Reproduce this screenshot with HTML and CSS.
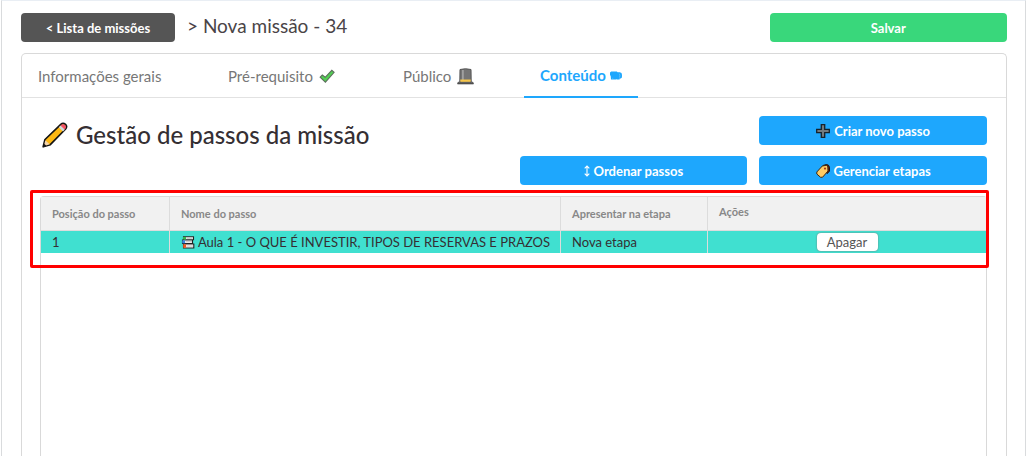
FILE: index.html
```html
<!DOCTYPE html>
<html lang="pt-BR">
<head>
<meta charset="utf-8">
<meta name="viewport" content="width=device-width, initial-scale=1">
<title>Nova missão - 34</title>
<link rel="stylesheet" href="styles.css">
</head>
<body>
<main class="frame">
  <header class="topbar">
    <div class="crumbs">
      <button class="btn btn-dark" type="button">&lt; Lista de missões</button>
      <h1 class="title">&gt; Nova missão - 34</h1>
    </div>
    <button class="btn btn-green" type="button">Salvar</button>
  </header>
  <section class="card">
    <nav class="tabs">
      <a class="tab" href="#info">Informações gerais</a>
      <a class="tab" href="#prerequisito">Pré-requisito
        <svg class="icon16" viewBox="0 0 16 16" aria-hidden="true"><path d="M1.200 9.200 3.300 7l2.900 2.300 6.600-7 2.300 2-8.700 9.900z" fill="#52d053" stroke="#5d705d" stroke-width="1.100"/></svg></a>
      <a class="tab" href="#publico">Público
        <svg class="icon17" viewBox="0 0 17 17" aria-hidden="true"><path d="M3 1.500Q8.500 0 14 1.500L14.200 14H2.800z" fill="#757575" stroke="#555"/><path d="M5 2h1.800v10H5z" fill="#a0a0a0"/><path d="M3.300 11.500h10.400v2.300H3.300z" fill="#f6c64b"/><path d="M1 14.200h2l1 .4h9l1-.4h2l.5 1.800H.500z" fill="#555" stroke="#444" stroke-width=".6"/></svg></a>
      <a class="tab tab-active" href="#conteudo" aria-current="page">Conteúdo
        <svg class="icon12" viewBox="0 0 12 9" aria-hidden="true"><path d="M0 1.500 1.200.500h5.600l.8.700h2.200L11.500 2l.5 2-.1 2.500-1.100 1.100H9.600v1H6.800L6.500 8l-.4.600H1L.700 5 0 4z" fill="#1ea7fd"/><path d="m9.200 2.600.6 1.800-.3 2.200M2.600 7.800l.2-1" fill="none" stroke="#8fd2fb" stroke-width=".5"/></svg></a>
    </nav>
    <div class="content">
      <div class="tools">
        <h2 class="heading">
          <svg class="pencil" viewBox="0 0 26 26" aria-hidden="true"><path d="M1.200 24.800 3 17.500 18.800 2.300Q21 .300 23.500 2.300 25.600 4.500 23.600 7L8.300 22.700z" fill="#fdb813" stroke="#151515" stroke-width="1.700" stroke-linejoin="round"/><path d="m3.300 18.300 4.400 4-5.800 1.900z" fill="#f3d3aa"/><path d="m1.300 24.700.8-3 2.300 2z" fill="#151515"/><path d="m16.800 5.200 4.200 4.200 1.800-1.900-4.300-4.100z" fill="#cfd8df"/><path d="m18.600 3.400 4.200 4.100q2.100-2.200.3-4.400-2.300-1.900-4.500.3z" fill="#f4516c"/></svg>
          Gestão de passos da missão
        </h2>
        <button class="btn btn-blue create" type="button">
          <svg class="icon14" viewBox="0 0 14 14" aria-hidden="true"><path d="M5.300.700h3.400v4.600h4.600v3.400H8.700v4.600H5.300V8.700H.700V5.300h4.600z" fill="#727a80" stroke="#17222b" stroke-width="1.300"/></svg>
          Criar novo passo</button>
        <button class="btn btn-blue order" type="button">
          <svg class="updown" viewBox="0 0 6 12" aria-hidden="true"><path d="M3 1v10M.700 3.300 3 1l2.300 2.300M.700 8.700 3 11l2.300-2.300" fill="none" stroke="#fff" stroke-width="1.100"/></svg>
          Ordenar passos</button>
        <button class="btn btn-blue" type="button">
          <svg class="icon14" viewBox="0 0 14 14" aria-hidden="true"><path d="M7 1.500 10.500.500q2.400 0 3 2.800v4L11 9.500z" fill="#6b1d12" stroke="#20150d"/><path d="M.800 8 6.300 2l4-.7 1.500 1.500.2 4.200-5.400 6.200-2 .1L.800 10z" fill="#fdcb63" stroke="#3c2815" stroke-linejoin="round"/><circle cx="9" cy="4.600" r="1.100" fill="#a93a1b"/></svg>
          Gerenciar etapas</button>
      </div>
      <div class="grid-box">
        <table class="steps">
          <colgroup><col class="col-pos"><col class="col-name"><col class="col-stage"><col></colgroup>
          <thead>
            <tr><th>Posição do passo</th><th>Nome do passo</th><th>Apresentar na etapa</th><th class="actions-head">Ações</th></tr>
          </thead>
          <tbody>
            <tr>
              <td>1</td>
              <td><svg class="icon14" viewBox="0 0 14 14" aria-hidden="true"><path d="M2.500 1.700h10v3h-10zM1.500 5h10v3.500h-10zM2.500 9h10.300v4H2.500z" fill="#fff" stroke="#222" stroke-width="1.100"/><path d="M2 2h3v2.500H2z" fill="#35b44a"/><path d="M1.200 5.300h3v3h-3z" fill="#3988e2"/><path d="M2.200 9.300h3v3.500h-3z" fill="#ef5a23"/><path d="M5.500 3.200h6M5 6.800h6M6 11h6" stroke="#aaa" stroke-width=".8"/></svg> Aula 1 - O QUE É INVESTIR, TIPOS DE RESERVAS E PRAZOS</td>
              <td>Nova etapa</td>
              <td class="actions"><button class="delete" type="button">Apagar</button></td>
            </tr>
          </tbody>
        </table>
        <div class="highlight"></div>
      </div>
    </div>
  </section>
</main>
</body>
</html>
```
FILE: styles.css
```css
* { box-sizing: border-box; }

body {
  margin: 0;
  background: #fff;
  color: #352f33;
  font-family: Lato, "Open Sans", sans-serif;
  font-size: 13px;
}

button { font-family: inherit; cursor: pointer; }
svg { flex: none; }

.frame {
  display: flex;
  flex-direction: column;
  min-height: 100vh;
  margin: 0 3px 0 1px;
  padding: 12px 18px 0 19px;
  border: 1px solid #d9dbdd;
  border-top-color: #e9eef4;
  border-bottom: 0;
}

.topbar {
  display: grid;
  grid-template-columns: repeat(4, 1fr);
  gap: 12px;
  margin-bottom: 11px;
}

.crumbs {
  grid-column: span 3;
  display: flex;
  gap: 12px;
}

.title {
  margin: 0;
  color: #4a4447;
  font-size: 19px;
  font-weight: 400;
  line-height: 26px;
}

.btn {
  display: flex;
  align-items: center;
  justify-content: center;
  gap: 4px;
  height: 29px;
  padding: 0 12px;
  border: 0;
  border-radius: 4px;
  color: #fff;
  font-size: 13px;
  font-weight: 700;
}

.btn-dark { width: 154px; background: #555; }
.btn-green { background: #39d77b; }
.btn-blue { background: #1ea7fd; }

.card {
  display: flex;
  flex: 1;
  flex-direction: column;
  border: 1px solid #d9d9d9;
  border-bottom: 0;
  border-radius: 5px 5px 0 0;
}

.tabs {
  display: grid;
  grid-template-columns: 190px 175px 137px auto 1fr;
  height: 44px;
  border-bottom: 1px solid #e2e2e2;
}

.tab {
  display: flex;
  align-items: center;
  justify-self: start;
  gap: 6px;
  height: 44px;
  padding: 0 16px;
  color: #777;
  font-size: 15px;
  text-decoration: none;
}

.tab-active {
  gap: 4px;
  border-bottom: 2px solid #1ea7fd;
  color: #1ea7fd;
  font-weight: 700;
}

.content {
  display: flex;
  flex: 1;
  flex-direction: column;
  padding: 18px 19px 0 18px;
}

.tools {
  display: grid;
  grid-template-columns: repeat(4, 1fr);
  gap: 11px 12px;
  margin-bottom: 11px;
}

.heading {
  grid-column: 1 / 3;
  grid-row: 1 / 3;
  display: flex;
  align-items: center;
  align-self: start;
  gap: 8px;
  margin: 0;
  padding-left: 2px;
  font-size: 24px;
  font-weight: 500;
  line-height: 38px;
  white-space: nowrap;
}

.create { grid-column: 4; }
.order { grid-column: 3; }

.grid-box {
  position: relative;
  flex: 1;
  border: 1px solid #d9d9d9;
  border-bottom: 0;
  border-radius: 4px 4px 0 0;
}

.steps {
  width: 100%;
  border-collapse: separate;
  border-spacing: 0;
  table-layout: fixed;
}

.col-pos { width: 129px; }
.col-name { width: 391px; }
.col-stage { width: 147px; }

.steps th,
.steps td {
  padding: 0 11px;
  border-right: 1px solid #dcdcdc;
  text-align: left;
  white-space: nowrap;
}

.steps th:last-child,
.steps td:last-child { border-right: 0; }

.steps th {
  height: 34px;
  border-bottom: 1px solid #dcdcdc;
  background: #f1f1f1;
  color: #888;
  font-size: 11px;
  font-weight: 700;
}

.steps .actions-head { padding-bottom: 4px; }

.steps td {
  height: 22px;
  background: #40e0d0;
  line-height: 20px;
}

.steps td svg { vertical-align: -2px; }
.steps .actions { text-align: center; }

.delete {
  display: block;
  width: 61px;
  height: 18px;
  margin: 0 auto;
  padding: 0;
  border: 0;
  border-radius: 4px;
  background: #fff;
  box-shadow: 0 0 2px #777;
  color: #555;
  font-size: 13px;
  line-height: 18px;
}

.highlight {
  position: absolute;
  top: -7px;
  right: -3px;
  left: -11px;
  height: 78px;
  border: 3px solid #f00;
  border-radius: 2px;
  pointer-events: none;
}

.icon12 { width: 12px; height: 9px; }
.icon14 { width: 14px; height: 14px; }
.icon16 { width: 16px; height: 16px; }
.icon17 { width: 17px; height: 17px; }
.updown { width: 6px; height: 12px; }
.pencil { width: 26px; height: 26px; }
```
